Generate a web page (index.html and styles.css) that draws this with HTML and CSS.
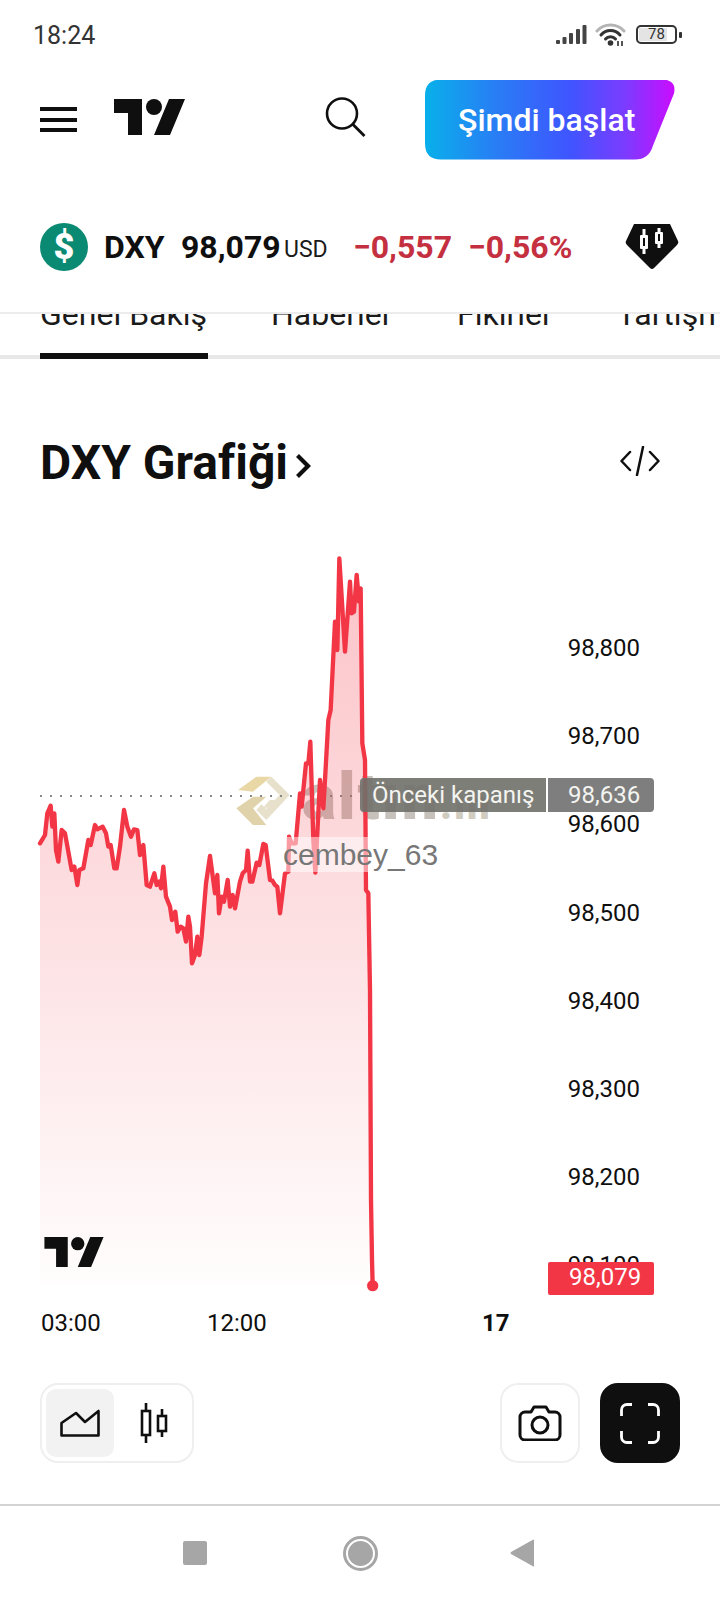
FILE: index.html
```html
<!DOCTYPE html>
<html lang="tr">
<head>
<meta charset="utf-8">
<title>DXY Grafiği</title>
<link rel="stylesheet" href="styles.css">
</head>
<body>
<div class="page">
  <div class="status">
    <span class="clock">18:24</span>
    <div class="status-icons">
      <svg class="sig" width="31" height="20" viewBox="0 0 31 20"><g fill="#444"><rect x="0" y="15" width="4" height="4" rx="1"/><rect x="6.500" y="12" width="4" height="7" rx="1"/><rect x="13" y="8" width="4" height="11" rx="1"/><rect x="20" y="4" width="4" height="15" rx="1"/><rect x="26.500" y="0" width="4" height="19" rx="1"/></g></svg>
      <svg class="wifi" width="31" height="25" viewBox="0 0 31 25"><g fill="none" stroke-linecap="round"><path d="M2 9C9 1 22 1 29 9" stroke="#b4b4b4" stroke-width="3"/><path d="M6 13C11 7 20 7 25 13" stroke="#333" stroke-width="3"/><path d="M10.500 17C13 14 18 14 20.500 17" stroke="#333" stroke-width="3"/></g><circle cx="15.500" cy="21" r="2.800" fill="#333"/><path d="M23 24v-5M27 24v-5" stroke="#444" stroke-width="1.800"/></svg>
      <div class="battery"><span class="batt-fill"></span><span class="batt-num">78</span></div>
      <span class="nub"></span>
    </div>
  </div>

  <div class="header">
    <div class="burger"><span></span><span></span><span></span></div>
    <svg class="tv-logo" width="71" height="36" viewBox="0 4 35.500 18"><path fill="#0f0f0f" d="M14 22H7V11H0V4h14v18zM28 22h-8l7.500-18h8L28 22z"/><circle fill="#0f0f0f" cx="20" cy="8" r="4"/></svg>
    <svg class="search" width="41" height="40" viewBox="0 0 41 40"><circle cx="17" cy="16.500" r="15" fill="none" stroke="#0f0f0f" stroke-width="2.600"/><path d="M28 27.500L39.500 39" stroke="#0f0f0f" stroke-width="2.800" fill="none"/></svg>
    <div class="cta">Şimdi başlat</div>
  </div>

  <div class="ticker">
    <div class="coin">$</div>
    <span class="sym">DXY</span>
    <span class="price">98,079</span>
    <span class="cur">USD</span>
    <span class="chg">−0,557</span>
    <span class="chg pct">−0,56%</span>
    <svg class="gem" width="54" height="46" viewBox="0 0 54 46"><path fill="#0f0f0f" d="M9 0H45L53 17Q54 19 52 21L29 44Q27 46 25 44L2 21Q0 19 1 17Z"/><g fill="#fff"><rect x="15" y="11" width="8" height="14" rx="1"/><rect x="17.500" y="5" width="3" height="25"/><rect x="30" y="8" width="8" height="12" rx="1"/><rect x="32.500" y="4" width="3" height="20"/></g><rect x="18" y="14" width="2" height="8" fill="#0f0f0f"/><rect x="33" y="10" width="2" height="7" fill="#0f0f0f"/></svg>
  </div>

  <div class="tabs">
    <div class="tab-row">
      <span class="tab tab-1">Genel Bakış</span>
      <span class="tab tab-2">Haberler</span>
      <span class="tab tab-3">Fikirler</span>
      <span class="tab tab-4">Tartışmalar</span>
    </div>
    <span class="tab-line"></span>
    <span class="tab-bar"></span>
  </div>

  <div class="title-row">
    <h1 class="title">DXY Grafiği</h1>
    <svg class="chev" width="16" height="24" viewBox="0 0 16 24"><path d="M2.500 1.500L13 12L2.500 22.500" fill="none" stroke="#0f0f0f" stroke-width="4.200"/></svg>
    <svg class="code" width="40" height="30" viewBox="0 0 40 30"><path d="M10 6L1.500 15L10 24M30 6L38.500 15L30 24M23 1L17 29" fill="none" stroke="#0f0f0f" stroke-width="2.500" stroke-linecap="round" stroke-linejoin="round"/></svg>
  </div>

  <div class="chart">
    <div class="yaxis">
      <span>98,800</span><span>98,700</span><span>98,600</span><span>98,500</span><span>98,400</span><span>98,300</span><span>98,200</span><span>98,100</span>
    </div>
    <div class="wm-text">altın<small>.in</small></div>
    <svg class="plot" width="720" height="770" viewBox="-60 -30 2160 2310">
      <defs>
        <linearGradient id="fade" gradientUnits="userSpaceOnUse" x1="0" y1="55" x2="0" y2="2240">
          <stop offset="0" stop-color="#f23645" stop-opacity=".3"/>
          <stop offset="1" stop-color="#f23645" stop-opacity=".01"/>
        </linearGradient>
      </defs>
      <g transform="translate(624 675)">
        <path fill="#e9d7a6" d="M30 75L85 35H130L75 80Z"/>
        <path fill="#e0d2ab" d="M25 130L75 95H115L75 130L115 180H75Z"/>
        <path fill="#e7e0cb" d="M130 35L185 90L115 165L85 135L100 118L115 132L155 90L115 50Z"/>
        <path fill="#e7e0cb" d="M125 105H150L130 128H105Z"/>
      </g>
      <line x1="60" y1="768" x2="1020" y2="768" stroke="#888" stroke-width="6" stroke-dasharray="6 24"/>
      <path fill="url(#fade)" d="M60 910L75 885L82 820L92 797L97 860L103 820L108 930L115 965L125 870L135 880L155 990L163 980L172 1035L178 990L190 985L205 900L212 915L225 855L232 868L248 860L258 880L265 920L272 915L283 985L290 985L300 920L312 810L322 860L333 890L342 868L352 870L360 945L370 915L380 1035L390 1040L403 1000L410 1035L418 1025L423 1045L430 980L438 1070L450 1100L456 1140L466 1115L473 1175L482 1160L490 1165L498 1205L505 1130L510 1160L516 1270L525 1245L532 1190L538 1245L545 1190L558 1030L570 948L585 1060L592 1005L597 1120L605 1070L612 1085L623 1020L630 1100L638 1065L645 1105L660 1025L668 1000L678 990L683 932L690 1025L697 1025L710 968L718 975L730 912L737 915L750 1020L757 1022L765 1035L772 1040L780 1120L795 1000L805 995L807 890L815 910L827 910L840 760L845 800L858 670L865 670L871 605L880 900L886 998L900 720L910 805L915 720L925 540L932 510L945 245L952 330L958 55L975 335L990 125L995 220L1002 215L1010 105L1017 185L1022 145L1027 610L1035 660L1038 1050L1045 1060L1050 1350L1053 1980L1056 2160L1058 2237L60 2237Z"/>
      <path fill="none" stroke="#f23645" stroke-width="13" stroke-linejoin="round" stroke-linecap="round" d="M60 910L75 885L82 820L92 797L97 860L103 820L108 930L115 965L125 870L135 880L155 990L163 980L172 1035L178 990L190 985L205 900L212 915L225 855L232 868L248 860L258 880L265 920L272 915L283 985L290 985L300 920L312 810L322 860L333 890L342 868L352 870L360 945L370 915L380 1035L390 1040L403 1000L410 1035L418 1025L423 1045L430 980L438 1070L450 1100L456 1140L466 1115L473 1175L482 1160L490 1165L498 1205L505 1130L510 1160L516 1270L525 1245L532 1190L538 1245L545 1190L558 1030L570 948L585 1060L592 1005L597 1120L605 1070L612 1085L623 1020L630 1100L638 1065L645 1105L660 1025L668 1000L678 990L683 932L690 1025L697 1025L710 968L718 975L730 912L737 915L750 1020L757 1022L765 1035L772 1040L780 1120L795 1000L805 995L807 890L815 910L827 910L840 760L845 800L858 670L865 670L871 605L880 900L886 998L900 720L910 805L915 720L925 540L932 510L945 245L952 330L958 55L975 335L990 125L995 220L1002 215L1010 105L1017 185L1022 145L1027 610L1035 660L1038 1050L1045 1060L1050 1350L1053 1980L1056 2160L1058 2237"/>
      <circle cx="1058" cy="2237" r="17" fill="#f23645"/>
    </svg>
    <svg class="chart-logo" width="60" height="30" viewBox="0 4 35.500 18"><path fill="#0f0f0f" d="M14 22H7V11H0V4h14v18zM28 22h-8l7.500-18h8L28 22z"/><circle fill="#0f0f0f" cx="20" cy="8" r="4"/></svg>
    <div class="cembey">cembey_63</div>
    <div class="prev">
      <span class="prev-name">Önceki kapanış</span>
      <span class="prev-val">98,636</span>
    </div>
    <div class="last">98,079</div>
  </div>

  <div class="xaxis">
    <span>03:00</span><span>12:00</span><span class="day">17</span>
  </div>

  <div class="controls">
    <div class="seg">
      <div class="seg-item seg-on">
        <svg width="40" height="28" viewBox="0 0 40 28"><path d="M1.500 26.500V14L16 4L25 13L38.500 2V26.500Z" fill="none" stroke="#0f0f0f" stroke-width="2.600" stroke-linejoin="round"/></svg>
      </div>
      <div class="seg-item seg-candle">
        <svg width="28" height="40" viewBox="0 0 28 40"><g fill="none" stroke="#0f0f0f" stroke-width="2.600"><rect x="2" y="8" width="8" height="24"/><path d="M6 0V8M6 32V40"/><rect x="18" y="13" width="8" height="15"/><path d="M22 6V13M22 28V34"/></g></svg>
      </div>
    </div>
    <div class="spacer"></div>
    <div class="btn">
      <svg width="44" height="36" viewBox="0 0 44 36"><path d="M13 7L16 2H28L31 7H37A5 5 0 0 1 42 12V30A5 5 0 0 1 37 35H7A5 5 0 0 1 2 30V12A5 5 0 0 1 7 7Z" fill="none" stroke="#0f0f0f" stroke-width="3" stroke-linejoin="round"/><circle cx="22" cy="20" r="8" fill="none" stroke="#0f0f0f" stroke-width="3"/></svg>
    </div>
    <div class="btn btn-dark">
      <svg width="40" height="41" viewBox="0 0 40 41"><path d="M1.500 13V7A5.500 5.500 0 0 1 7 1.500H12M28 1.500H33A5.500 5.500 0 0 1 38.500 7V13M38.500 28V34A5.500 5.500 0 0 1 33 39.500H28M12 39.500H7A5.500 5.500 0 0 1 1.500 34V28" fill="none" stroke="#fff" stroke-width="2.800"/></svg>
    </div>
  </div>

  <div class="nav">
    <span class="nav-square"></span>
    <span class="nav-circle"></span>
    <svg class="nav-back" width="24" height="28" viewBox="0 0 24 28"><path d="M24 1V27Q24 28 22.500 27L1 15Q0 14 1 13L22.500 1Q24 0 24 1Z" fill="#a6a6a6"/></svg>
  </div>
</div>
</body>
</html>
```

FILE: styles.css
```css
* { box-sizing: border-box; }
html, body { margin: 0; padding: 0; background: #fff; }
body { font-family: Roboto, "Liberation Sans", sans-serif; color: #0f0f0f; }
.page { width: 720px; height: 1600px; display: flex; flex-direction: column; overflow: hidden; }

.status { height: 69px; flex: none; display: flex; align-items: center; justify-content: space-between; padding: 2px 38px 0 33px; }
.clock { font-size: 25px; color: #333; line-height: 1; }
.status-icons { display: flex; align-items: center; margin-top: -2px; }
.sig { margin-right: 8px; }
.wifi { margin-right: 10px; }
.battery { width: 41px; height: 19px; border: 2.500px solid #333; border-radius: 5px; display: flex; align-items: center; justify-content: center; position: relative; overflow: hidden; }
.batt-fill { position: absolute; left: 1px; top: 1px; bottom: 1px; width: 75%; background: #e4e4e4; }
.batt-num { position: relative; font-size: 15px; line-height: 1; color: #333; }
.nub { width: 3px; height: 6px; background: #333; margin-left: 2px; border-radius: 1px; }

.header { height: 101px; flex: none; display: flex; align-items: center; padding-left: 40px; }
.burger { width: 37px; height: 25px; display: flex; flex-direction: column; justify-content: space-between; margin-right: 37px; }
.burger span { display: block; height: 4px; background: #0f0f0f; }
.tv-logo { margin-right: 140px; margin-top: -6px; flex: none; }
.search { margin-right: 59px; margin-top: -6px; flex: none; }
.cta { width: 250px; height: 80px; flex: none; display: flex; align-items: center; padding-left: 33px; font-size: 32px; font-weight: 500; color: #fff; background: linear-gradient(90deg, #08b0ea 0%, #2a7bf5 30%, #3f55ff 58%, #7b3cff 80%, #cb0cff 100%); clip-path: path("M16 0H236Q252 0 249 14L228 66Q224 80 210 80H16Q0 80 0 64V16Q0 0 16 0Z"); }

.ticker { height: 142px; flex: none; display: flex; align-items: center; padding-left: 40px; padding-top: 12px; white-space: nowrap; }
.coin { width: 48px; height: 48px; flex: none; border-radius: 50%; background: #0b8a73; color: #fff; font-size: 36px; font-weight: 900; display: flex; align-items: center; justify-content: center; margin-right: 16px; line-height: 1; }
.sym { width: 77px; flex: none; font-size: 32px; font-weight: 700; }
.price { width: 103px; flex: none; font-size: 32px; font-weight: 700; }
.cur { font-size: 23px; width: 69px; flex: none; padding-top: 5px; color: #1a1a1a; }
.chg { font-size: 32px; font-weight: 700; color: #c4303f; width: 115px; flex: none; }
.pct { width: 157px; }
.gem { flex: none; }

.tabs { height: 47px; flex: none; position: relative; overflow: hidden; border-top: 2px solid #ececec; }
.tab-row { display: flex; margin-top: -20px; white-space: nowrap; font-size: 32px; line-height: 40px; color: #1a1a1a; }
.tab-1 { margin-left: 40px; width: 231px; flex: none; }
.tab-2 { width: 186px; flex: none; }
.tab-3 { width: 160px; flex: none; }
.tab-4 { flex: none; }
.tab-line { position: absolute; left: 0; right: 0; bottom: 0; height: 4px; background: #e8e8e8; }
.tab-bar { position: absolute; left: 40px; bottom: 0; width: 168px; height: 6px; background: #0f0f0f; }

.title-row { height: 171px; flex: none; display: flex; align-items: center; padding: 36px 60px 0 40px; }
.title { margin: 0 7px 0 0; font-size: 48px; font-weight: 700; line-height: 56px; }
.chev { margin-top: 6px; }
.code { margin-left: auto; margin-top: -4px; }

.chart { height: 770px; flex: none; position: relative; }
.plot { position: absolute; left: 0; top: 0; }
.yaxis { position: absolute; right: 80px; top: 74px; display: flex; flex-direction: column; font-size: 24px; color: #0f0f0f; }
.yaxis span { height: 88.200px; line-height: 88.200px; }
.wm-text { position: absolute; left: 302px; top: 230px; font-size: 64px; line-height: 76px; font-weight: 900; letter-spacing: 2px; color: #c6c2bb; }
.wm-text small { font-size: 40px; color: #d0cdc0; }
.chart-logo { position: absolute; left: 44px; top: 707px; }
.cembey { position: absolute; left: 283px; top: 307px; padding: 0 0 2px; height: 35px; font-family: "Liberation Sans", Arial, sans-serif; font-size: 30px; line-height: 35px; color: #777; background: rgba(255,255,255,.5); }
.prev { position: absolute; left: 360px; top: 248px; height: 34px; display: flex; color: #f4f4f0; font-size: 24px; line-height: 34px; }
.prev-name { width: 186px; padding-left: 12px; background: rgba(112,112,106,.9); border-radius: 4px 0 0 4px; white-space: nowrap; }
.prev-val { width: 106px; margin-left: 2px; padding-left: 20px; background: rgba(112,112,112,.9); border-radius: 0 4px 4px 0; }
.last { position: absolute; left: 548px; top: 732px; width: 106px; height: 33px; padding-left: 21px; border-radius: 2px; background: #f23645; color: #fff; font-size: 24px; line-height: 31px; }

.xaxis { height: 46px; flex: none; display: grid; grid-template-columns: 166px 275px auto; align-items: center; padding-left: 41px; font-size: 24px; }
.day { font-weight: 700; }

.controls { height: 158px; flex: none; display: flex; align-items: flex-start; padding: 37px 40px 0; }
.seg { width: 154px; height: 80px; flex: none; border: 2px solid #efefef; border-radius: 18px; display: flex; align-items: center; padding-left: 4px; }
.seg-item { width: 68px; height: 68px; flex: none; border-radius: 10px; display: flex; align-items: center; justify-content: center; }
.seg-candle { margin-left: 6px; }
.seg-on { background: #f2f2f2; }
.spacer { flex: 1; }
.btn { width: 80px; height: 80px; flex: none; border: 2px solid #efefef; border-radius: 18px; display: flex; align-items: center; justify-content: center; }
.btn-dark { background: #0f0f0f; border-color: #0f0f0f; margin-left: 20px; }

.nav { flex: 1; border-top: 2px solid #d4d4d4; display: flex; align-items: center; padding-left: 183px; }
.nav-square { width: 24px; height: 24px; background: #a6a6a6; border-radius: 2px; margin-right: 141px; }
.nav-circle { width: 25px; height: 25px; border-radius: 50%; background: #a6a6a6; outline: 3px solid #a6a6a6; outline-offset: 2px; margin-right: 137px; }
.nav-back { flex: none; }
```
